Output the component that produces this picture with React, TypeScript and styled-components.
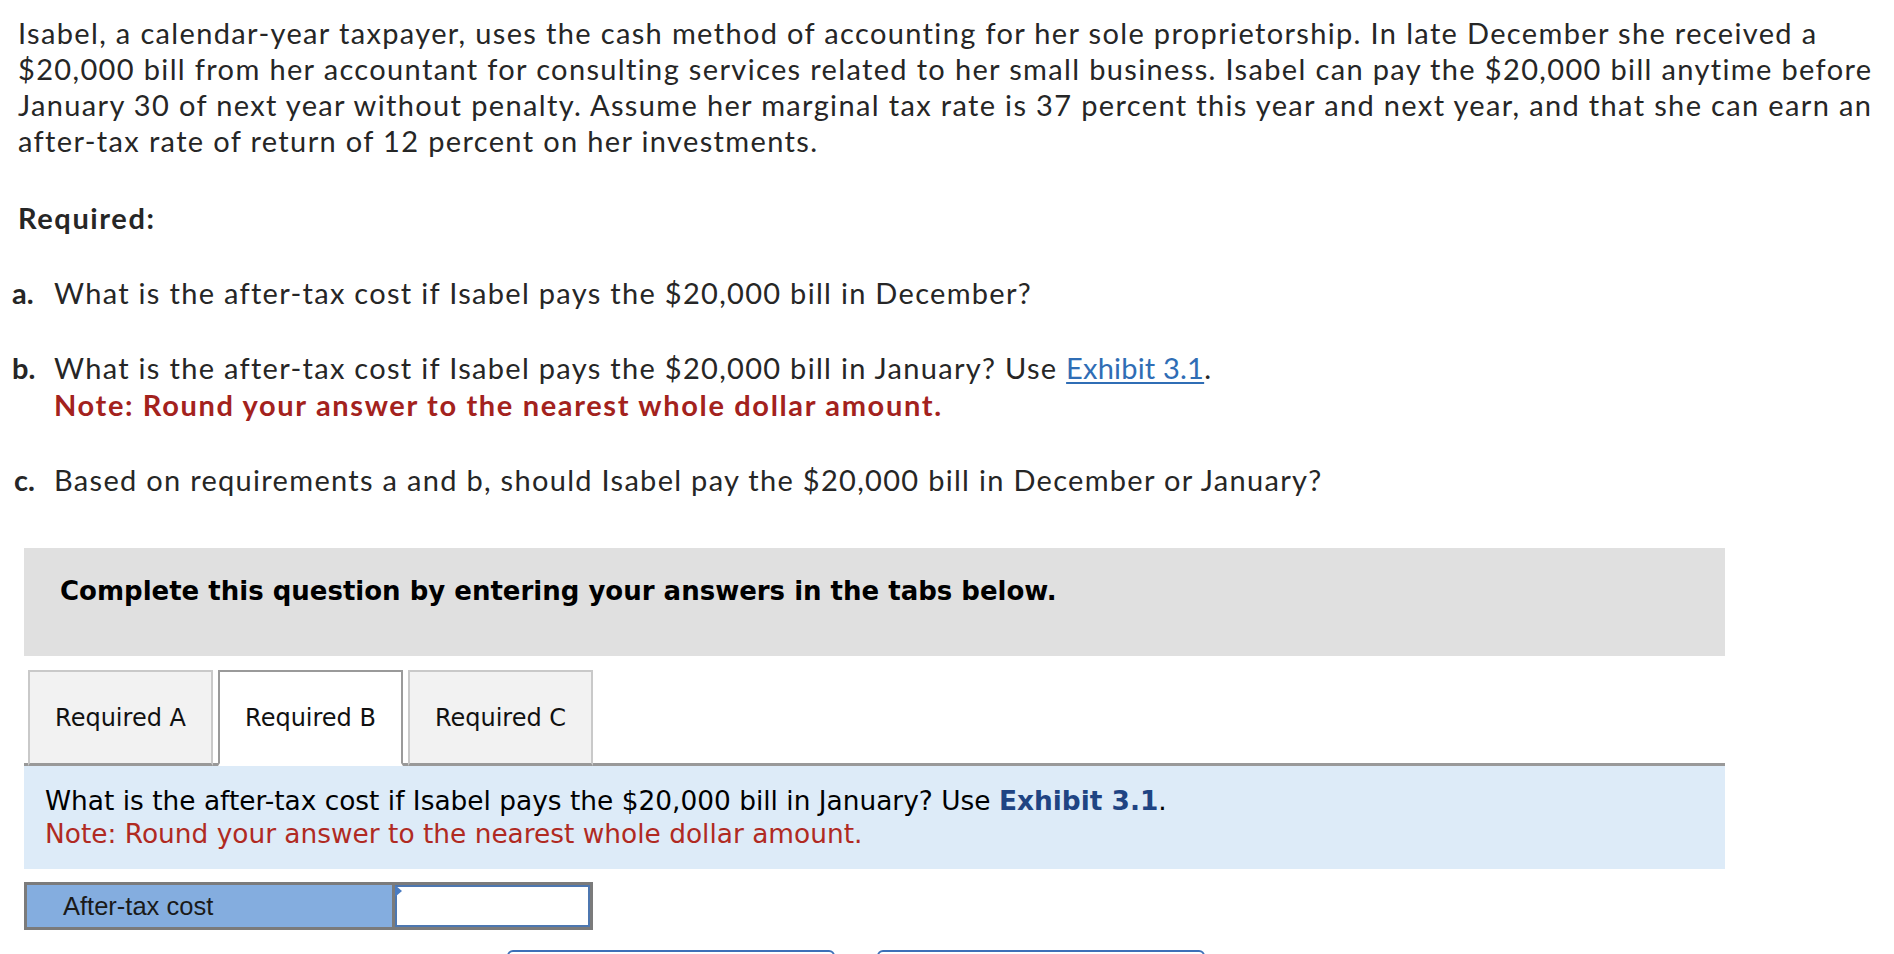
import React, { FC } from 'react'
import styled, { createGlobalStyle } from 'styled-components'

const GlobalStyle = createGlobalStyle`
  html, body {
    margin: 0;
    padding: 0;
    background: #ffffff;
  }
  body {
    font-family: Lato, "Open Sans", sans-serif;
    color: #262626;
  }
`

const Page = styled.main`
  display: flex;
  flex-direction: column;
  padding: 15px 0 0 0;
`

const Intro = styled.p`
  margin: 0 0 0 18px;
  width: 1872px;
  font-size: 29px;
  line-height: 36px;
  letter-spacing: 1.35px;
`

const RequiredTitle = styled.h3`
  margin: 41px 0 0 18px;
  font-size: 29px;
  line-height: 36px;
  font-weight: 700;
  letter-spacing: 1.6px;
`

const Requirement = styled.div`
  display: grid;
  grid-template-columns: 42px 1fr;
  margin: 38px 0 0 12px;
  font-size: 29px;
  line-height: 37px;
  letter-spacing: 1.3px;
`

const ItemLetter = styled.span<{ $nudge?: number }>`
  font-weight: 700;
  letter-spacing: 0;
  padding-left: ${p => p.$nudge ?? 0}px;
`

const ItemBody = styled.div`
  display: flex;
  flex-direction: column;
`

const Link = styled.a`
  color: #2f6db5;
  text-decoration: underline;
  text-underline-offset: 3px;
  letter-spacing: 0.2px;
`

const RedNote = styled.span<{ $bold?: boolean }>`
  color: ${p => (p.$bold ? '#a3221d' : '#b02a22')};
  font-weight: ${p => (p.$bold ? 700 : 400)};
  letter-spacing: ${p => (p.$bold ? '1.65px' : 'normal')};
`

const Workspace = styled.section`
  margin: 50px 0 0 24px;
  width: 1701px;
  font-family: "DejaVu Sans", Verdana, sans-serif;
  color: #000;
`

const Instructions = styled.div`
  box-sizing: border-box;
  height: 108px;
  padding: 26px 36px;
  background: #e0e0e0;
  font-size: 26px;
  line-height: 34px;
  font-weight: 700;
`

const TabBar = styled.div`
  display: flex;
  gap: 5px;
  margin-top: 14px;
  padding-left: 4px;
  border-bottom: 3px solid #999999;
`

const Tab = styled.button<{ $active?: boolean }>`
  box-sizing: border-box;
  width: 185px;
  height: 96px;
  margin-bottom: -3px;
  padding: 0;
  font-family: "DejaVu Sans", Verdana, sans-serif;
  font-size: 24px;
  color: #111;
  background: ${p => (p.$active ? '#ffffff' : '#f2f2f2')};
  border: 2px solid ${p => (p.$active ? '#9a9a9a' : '#c9c9c9')};
  border-bottom: ${p => (p.$active ? '3px solid #ffffff' : '3px solid #999999')};
  cursor: pointer;
`

const Prompt = styled.div`
  box-sizing: border-box;
  height: 103px;
  padding: 18px 21px;
  background: #ddebf8;
  font-size: 26.4px;
  line-height: 33px;
`

const Exhibit = styled.strong`
  color: #1f4483;
`

const AnswerRow = styled.div`
  display: grid;
  grid-template-columns: 368px 1fr;
  box-sizing: border-box;
  width: 569px;
  height: 48px;
  margin-top: 13px;
  border: 3px solid #7b7b7b;
  font-family: "Liberation Sans", Arial, sans-serif;
`

const AnswerLabel = styled.div`
  display: flex;
  align-items: center;
  padding-left: 36px;
  background: #84addf;
  border-right: 3px solid #7b7b7b;
  font-size: 25.5px;
  color: #1a1a1a;
`

const AnswerCell = styled.div`
  position: relative;
  box-sizing: border-box;
  border: 2px solid #4d77b0;
  background: #fff;

  &::before {
    content: '';
    position: absolute;
    top: -2px;
    left: -2px;
    border-style: solid;
    border-width: 6px 0 6px 7px;
    border-color: transparent transparent transparent #4a7cc2;
  }
`

const NavRow = styled.div`
  display: flex;
  gap: 42px;
  margin: 20px 0 0 483px;
`

const NavButton = styled.button`
  width: 328px;
  height: 52px;
  border: 2px solid #3d70b8;
  border-radius: 6px;
  background: #fff;
  cursor: pointer;
`

const tabs = ['Required A', 'Required B', 'Required C']

const App: FC = () => {
  return (
    <>
      <GlobalStyle />
      <Page>
        <Intro>
          Isabel, a calendar-year taxpayer, uses the cash method of accounting for her sole proprietorship. In late December she received a
          $20,000 bill from her accountant for consulting services related to her small business. Isabel can pay the $20,000 bill anytime before
          January 30 of next year without penalty. Assume her marginal tax rate is 37 percent this year and next year, and that she can earn an
          after-tax rate of return of 12 percent on her investments.
        </Intro>

        <RequiredTitle>Required:</RequiredTitle>

        <Requirement>
          <ItemLetter>a.</ItemLetter>
          <ItemBody>What is the after-tax cost if Isabel pays the $20,000 bill in December?</ItemBody>
        </Requirement>

        <Requirement>
          <ItemLetter>b.</ItemLetter>
          <ItemBody>
            <span>
              What is the after-tax cost if Isabel pays the $20,000 bill in January? Use <Link href="#">Exhibit 3.1</Link>.
            </span>
            <RedNote $bold>Note: Round your answer to the nearest whole dollar amount.</RedNote>
          </ItemBody>
        </Requirement>

        <Requirement>
          <ItemLetter $nudge={2}>c.</ItemLetter>
          <ItemBody>Based on requirements a and b, should Isabel pay the $20,000 bill in December or January?</ItemBody>
        </Requirement>

        <Workspace>
          <Instructions>Complete this question by entering your answers in the tabs below.</Instructions>

          <TabBar>
            {tabs.map(t => (
              <Tab key={t} $active={t === 'Required B'}>
                {t}
              </Tab>
            ))}
          </TabBar>

          <Prompt>
            What is the after-tax cost if Isabel pays the $20,000 bill in January? Use <Exhibit>Exhibit 3.1</Exhibit>.
            <br />
            <RedNote>Note: Round your answer to the nearest whole dollar amount.</RedNote>
          </Prompt>

          <AnswerRow>
            <AnswerLabel>After-tax cost</AnswerLabel>
            <AnswerCell />
          </AnswerRow>

          <NavRow>
            <NavButton aria-label="Required A" />
            <NavButton aria-label="Required C" />
          </NavRow>
        </Workspace>
      </Page>
    </>
  )
}

export default App
